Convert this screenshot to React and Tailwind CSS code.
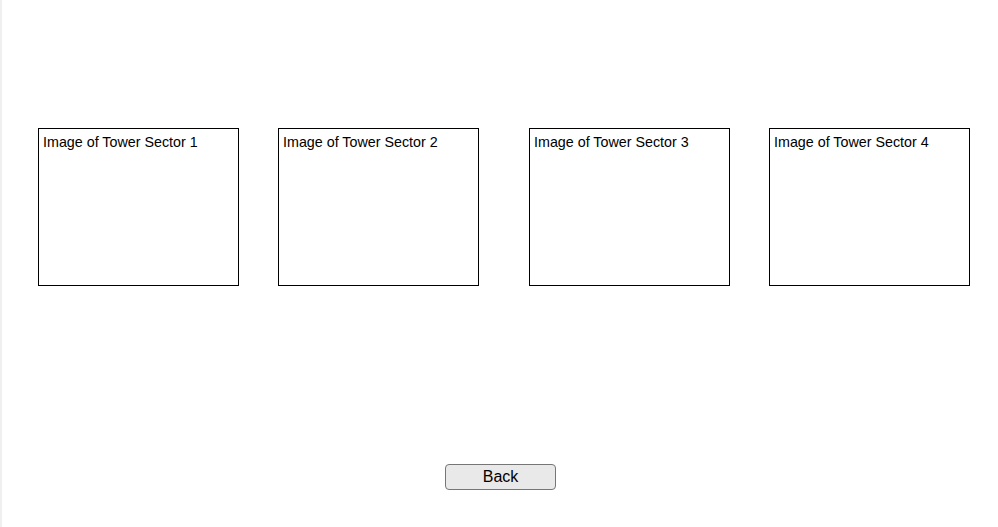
import React from 'react';

const SectorBox = ({ n, className = '' }) => (
  <div
    className={`w-[201px] h-[158px] border border-black bg-white px-1 pt-[5px] text-[14.3px] leading-4 text-black ${className}`}
  >
    Image of Tower Sector {n}
  </div>
);

const App = () => {
  return (
    <div
      className="w-[998px] h-[527px] bg-white border-l-2 border-[#efefef] flex flex-col"
      style={{ fontFamily: '"Liberation Sans", Arial, sans-serif' }}
    >
      {/* Tower sector images */}
      <div className="flex pt-[128px] pl-[36px]">
        <SectorBox n={1} />
        <SectorBox n={2} className="ml-[39px]" />
        <SectorBox n={3} className="ml-[50px]" />
        <SectorBox n={4} className="ml-[39px]" />
      </div>

      {/* Back button */}
      <div className="flex justify-center mt-[178px] pl-[1px]">
        <button className="w-[111px] h-[26px] bg-[#e9e9e9] border border-[#767676] rounded-[4px] text-[16px] leading-none text-black">
          Back
        </button>
      </div>
    </div>
  );
};

export default App;
